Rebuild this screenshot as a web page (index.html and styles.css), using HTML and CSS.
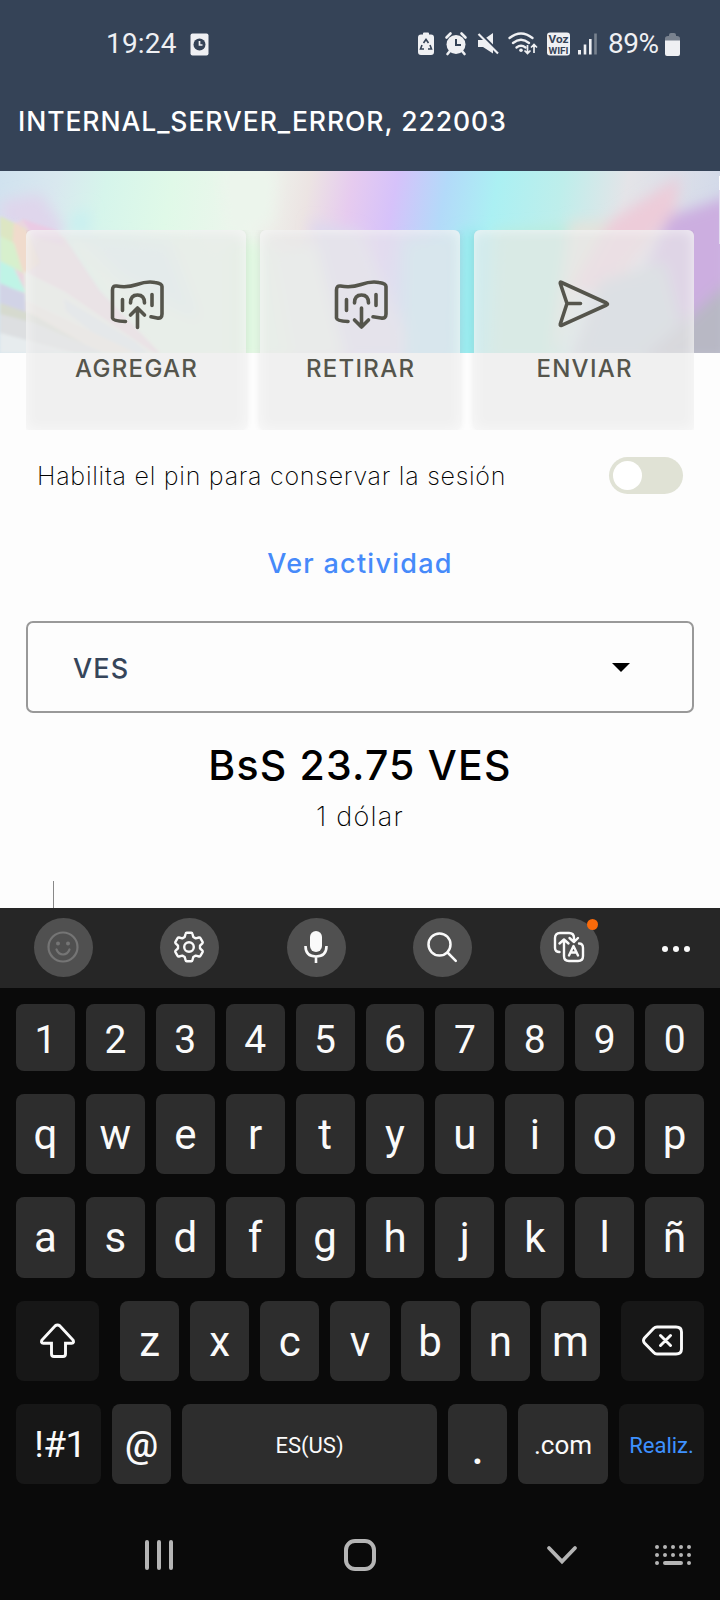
FILE: index.html
```
<!DOCTYPE html>
<html lang="es">
<head>
<meta charset="utf-8">
<title>Cartera</title>
<link rel="stylesheet" href="styles.css">
</head>
<body>
<header class="header">
  <div class="status">
    <span class="clock">19:24</span>
    <svg class="note" width="19" height="23" viewBox="0 0 19 23"><rect x=".5" y=".5" width="18" height="22" rx="2" fill="#eff0f3"/><circle cx="9.500" cy="11.500" r="6" fill="#354357"/><path d="M9.500 8v4h3" fill="none" stroke="#eff0f3" stroke-width="1.700"/></svg>
    <svg class="sysicons" width="180" height="24" viewBox="0 0 180 24" fill="#eff0f3" stroke="none">
      <path d="M5 2.500V1.500Q5 .5 6 .5h4q1 0 1 1v1h2q3 0 3 3V20q0 3-3 3H3q-3 0-3-3V5.500q0-3 3-3z"/>
      <path d="M5.500 11 8 7.500l2.500 3.500M12 13l1.500 4H10M6 17H2.500L4 13" fill="none" stroke="#354357" stroke-width="1.600"/>
      <circle cx="38" cy="12.500" r="9.500"/><path d="m28.500 5.500 4-4m11 0 4 4M32 19l-2.500 3M44 19l2.500 3" stroke="#eff0f3" stroke-width="2.600" fill="none" stroke-linecap="round"/><path d="M38 7v6h5" stroke="#354357" stroke-width="2" fill="none"/>
      <path d="M60 8h5l10-7v20.500l-10-6.500h-5z"/><path d="M60.500 0 80 19.500" stroke="#354357" stroke-width="3"/><path d="m60.500 2 19.500 19.500" stroke="#eff0f3" stroke-width="2.200"/>
      <g fill="none" stroke="#eff0f3" stroke-width="2.300" stroke-linecap="round"><path d="M91.500 6q11.500-9 23 0M95 11q8-6.500 16 0M98.500 15.500q4.500-3.500 9 0"/></g><circle cx="103" cy="18.300" r="1.800"/>
      <path d="M109.500 13v8.500m-3-3 3 3 3-3M116 21v-8.500m-3 3 3-3 3 3" fill="none" stroke="#eff0f3" stroke-width="1.700"/>
      <rect x="129" y=".5" width="23" height="23" rx="3"/><text x="140.500" y="10.800" class="voz" textLength="20" lengthAdjust="spacingAndGlyphs">Voz</text><text x="140.500" y="21.700" class="wifi" textLength="20" lengthAdjust="spacingAndGlyphs">WIFI</text>
      <path d="M160 18v4.500h3V18zM165.700 12.500v10h2.600v-10zM171 7v15.500h2.600V7z"/><path d="M176.200 1.500v21h2.600v-21z" fill="#79828f"/>
    </svg>
    <span class="pct">89%</span>
    <svg class="batt" width="15" height="23" viewBox="0 0 15 23"><path d="M0 8V5.500Q0 3 3 3h1V2q0-2 2-2h3q2 0 2 2v1h1q3 0 3 2.500V8z" fill="#79828f"/><path d="M0 7.500h15V21q0 2-2 2H2q-2 0-2-2z" fill="#eff0f3"/></svg>
  </div>
  <div class="error"><span>INTERNAL_SERVER_ERROR, 222003</span></div>
</header>
<main class="page">
  <svg class="banner" viewBox="0 0 720 182" preserveAspectRatio="none">
    <defs>
      <linearGradient id="base" gradientUnits="userSpaceOnUse" x1="0" y1="0" x2="700" y2="130"><stop offset="0" stop-color="#d0e2ef"/><stop offset=".08" stop-color="#d9e8ef"/><stop offset=".15" stop-color="#d6f5eb"/><stop offset=".24" stop-color="#e0f9e8"/><stop offset=".36" stop-color="#eef5ed"/><stop offset=".43" stop-color="#ece4e3"/><stop offset=".49" stop-color="#e6cbef"/><stop offset=".55" stop-color="#d6c2fa"/><stop offset=".62" stop-color="#b3daf9"/><stop offset=".69" stop-color="#abf0f3"/><stop offset=".78" stop-color="#beeeeb"/><stop offset=".87" stop-color="#e4e4e8"/><stop offset="1" stop-color="#d3dae9"/></linearGradient>
      <filter id="soft" x="-30%" y="-30%" width="160%" height="160%"><feGaussianBlur stdDeviation="7"/></filter>
      <filter id="fine"><feGaussianBlur stdDeviation="1.500"/></filter>
    </defs>
    <rect width="720" height="182" fill="url(#base)"/>
    <g filter="url(#soft)">
      <path d="M65 65 300 80 340 190H150z" fill="#e6f5e7"/>
      <path d="M75 65 170 70 200 150 120 110z" fill="#dbeeed"/>
      <path d="M230 70h30v120h-30z" fill="#e0f8e1"/>
      <path d="M220 0 275 0 272 50 230 60z" fill="#ecf5ec"/>
      <path d="M270 80 330 70 350 190H290z" fill="#e8eeea"/>
      <path d="M310 50 360 60 420 190H345z" fill="#dcd8ee"/>
      <path d="M405 70h50v120h-50z" fill="#b8dff3"/>
      <path d="M460 60h22v130h-24z" fill="#97eaed"/>
      <path d="M495 60 570 55 560 190H490z" fill="#b9ebdd"/>
      <path d="M570 50 610 50 590 100 550 190z" fill="#e2e3dc"/>
      <path d="M680 5 610 50 570 120h40L675 40z" fill="#edccd9"/>
      <path d="M670 45 730 25v165H600z" fill="#ccaee0"/>
      <path d="M600 110 665 90 690 190H570z" fill="#c4ced9"/>
      <path d="M730 110v80h-90z" fill="#b8b8c4"/>
      <path d="M0 30 40 22 66 60 50 72 0 50z" fill="#dfd6ec"/>
      <path d="M70 48 88 35 90 62 70 65z" fill="#c8f0f0"/>
    </g>
    <g filter="url(#fine)">
      <path d="M24 48 64 66 100 120 160 182H60L0 100V60z" fill="#ead6df"/>
      <path d="M22 48 58 60 64 74 34 66z" fill="#eacbe4"/>
      <path d="M0 45 26 58 28 90 0 82z" fill="#dde6c3"/>
      <path d="M14 51 27 60 40 92 23 104 12 80z" fill="#f0dbcc"/>
      <path d="M0 65 14 72 23 102 0 90z" fill="#d7f0cd"/>
      <path d="M0 90 14 97 26 122 0 114z" fill="#bff4e6"/>
      <path d="M0 112 25 123 28 145 0 134z" fill="#d1d3e6"/>
      <path d="m24 100 40 20 90 62H60L26 145z" fill="#e9ede6"/>
      <path d="m64 128 70 42 14 12h-30L66 140z" fill="#dce4ea"/>
      <path d="m26 130 110 52h-30l-80-37z" fill="#ece4de"/>
      <path d="M0 132 32 143 100 182H0z" fill="#d6dacf"/>
      <path d="M0 143 35 152 105 182H0z" fill="#dddfe1"/>
      <path d="M0 162 75 182H0z" fill="#e7ecee"/>
    </g>
    <rect x="719" y="5" width="1" height="14" fill="#fff"/><rect x="719" y="19" width="1" height="54" fill="#e4def0"/>
  </svg>
  <section class="actions">
    <button class="card"><svg width="54" height="52" viewBox="0 0 54 52"><path d="M15.500 42.500Q3 42 2.500 39V11q0-4.500 4-4Q17 9 27 5.500T45 3.500q7 1 7 4V35q0 5-5 4l-6-1.200M12.500 20.500v11M42 15.500v11M20.500 24q0-8 7-8t7 8M27.500 48.500V29m-7 7 7-7 7 7"/></svg><span>AGREGAR</span></button>
    <button class="card mid"><svg width="54" height="52" viewBox="0 0 54 52"><path d="M14 42.500Q3 42 2.500 39V11q0-4.500 4-4Q17 9 27 5.500T45 3.500q7 1 7 4V35q0 5-5 4l-8-1.200M12.500 20.500v11M42 15.500v11M20.500 24q0-8 7-8t7 8M27.500 29v19m-7-7 7 7 7-7"/></svg><span>RETIRAR</span></button>
    <button class="card"><svg width="54" height="52" viewBox="0 0 54 52"><path d="M3.500 3.500q-1.500-1-1.200 1L9 24.500 2.300 45q-.3 2 1.200 1.300L48.500 26q2-1 0-2zM9 24.500h13.500"/></svg><span>ENVIAR</span></button>
  </section>
  <section class="pin"><span>Habilita el pin para conservar la sesión</span><i class="toggle"></i></section>
  <a class="link"><span>Ver actividad</span></a>
  <div class="select"><span>VES</span><i class="caret"></i></div>
  <div class="amount"><span>BsS 23.75 VES</span></div>
  <div class="rate"><span>1 dólar</span></div>
  <div class="field"></div>
</main>
<section class="tools">
  <i class="tool"><svg width="59" height="59" fill="none" stroke="#757575" stroke-width="2.200" stroke-linecap="round"><circle cx="29" cy="29" r="14.500"/><path d="M22.500 31.500q2 5 6.500 5t6.500-5"/><g fill="#757575" stroke="none"><circle cx="24" cy="25.500" r="2"/><circle cx="34" cy="25.500" r="2"/></g></svg></i>
  <i class="tool"><svg width="59" height="59" fill="none" stroke="#fafafa" stroke-width="2.400" stroke-linejoin="round"><circle cx="29" cy="29" r="4.800"/><path d="M26.700 14.800h4.600q.9 0 1.100.9l.9 3.300 2.400 1.400 3.300-.9q.9-.2 1.400.6l2.200 3.800q.4.800-.2 1.400L40 27.700v2.600l2.400 2.400q.6.600.2 1.400l-2.200 3.800q-.5.800-1.400.6l-3.300-.9-2.400 1.400-.9 3.300q-.2.900-1.100.9h-4.600q-.9 0-1.100-.9l-.9-3.300-2.400-1.400-3.300.9q-.9.200-1.400-.6l-2.200-3.800q-.4-.8.200-1.400l2.400-2.400v-2.600l-2.400-2.400q-.6-.6-.2-1.400l2.200-3.800q.5-.8 1.400-.6l3.300.9 2.400-1.400.9-3.300q.2-.9 1.100-.9z"/></svg></i>
  <i class="tool"><svg width="59" height="59" fill="none" stroke="#fafafa" stroke-width="2.600"><rect x="23" y="13" width="12" height="21" rx="6" fill="#fafafa" stroke="none"/><path d="M18.500 28q0 10.500 10.500 10.500T39.500 28M29 38.500V45"/></svg></i>
  <i class="tool"><svg width="59" height="59" fill="none" stroke="#fafafa" stroke-width="2.500" stroke-linecap="round"><circle cx="26.500" cy="26.500" r="11"/><path d="m34.500 34.500 8.300 8.300"/></svg></i>
  <i class="tool"><svg width="59" height="59" fill="none" stroke="#fafafa" stroke-width="2.400" stroke-linecap="round" stroke-linejoin="round"><path d="M19.500 34q-4.500 0-4.500-4V20q0-5 5-5h9q5 0 5 5v4M29.500 20l4.500 4 4-4M24 22v16q0 5 5 5h9q5 0 5-5v-8q0-4.500-4-4.500M19.500 25.500 24 21.500l4.500 4"/><path d="m29 37.500 4.500-9.500 4.500 9.500m-7.300-3h5.600"/></svg><b class="badge"></b></i>
  <svg class="more" width="30" height="10" fill="#fafafa"><circle cx="4" cy="5" r="3"/><circle cx="15" cy="5" r="3"/><circle cx="26" cy="5" r="3"/></svg>
</section>
<section class="keyboard">
  <div class="row digits"><b>1</b><b>2</b><b>3</b><b>4</b><b>5</b><b>6</b><b>7</b><b>8</b><b>9</b><b>0</b></div>
  <div class="row"><b>q</b><b>w</b><b>e</b><b>r</b><b>t</b><b>y</b><b>u</b><b>i</b><b>o</b><b>p</b></div>
  <div class="row"><b>a</b><b>s</b><b>d</b><b>f</b><b>g</b><b>h</b><b>j</b><b>k</b><b>l</b><b>ñ</b></div>
  <div class="row third"><b class="dark side"><svg width="36" height="36" viewBox="0 0 36 36"><path d="M15 3q2.500-2 5 0L33 17q1.500 3-1.500 3.300h-6V31q0 2.500-2.500 2.500h-9Q11.500 33.500 11.500 31V20.300h-8Q.5 20 2 17z"/></svg></b><div class="letters"><b>z</b><b>x</b><b>c</b><b>v</b><b>b</b><b>n</b><b>m</b></div><b class="dark side"><svg width="42" height="32" viewBox="0 0 42 32"><path d="M15 2h19q5.500 0 5.500 5v17q0 5-5.500 5H15q-2 0-3.500-1.700L2.500 18q-2-2.500 0-5l9-9.500Q13 2 15 2zM18.500 10.500l10 10m0-10-10 10"/></svg></b></div>
  <div class="row last"><b class="dark sym">!#1</b><b class="at">@</b><b class="space">ES(US)</b><b class="dot">.</b><b class="com">.com</b><b class="dark done">Realiz.</b></div>
</section>
<nav class="nav">
  <svg class="recent" width="28" height="32"><path d="M2 3v26M14 3v26M26 3v26" stroke="#b5b5b5" stroke-width="4" stroke-linecap="round"/></svg>
  <svg class="home" width="32" height="32"><rect x="2" y="2" width="28" height="28" rx="9" fill="none" stroke="#b5b5b5" stroke-width="4"/></svg>
  <svg class="down" width="32" height="20"><path d="m3 3 13 13.500L29 3" fill="none" stroke="#b5b5b5" stroke-width="3.800" stroke-linecap="round"/></svg>
  <svg class="kb" width="36" height="20" stroke="#b5b5b5" stroke-width="4" stroke-linecap="round"><path d="M2 2h.01M10 2h.01M18 2h.01M26 2h.01M34 2h.01M2 10h.01M10 10h.01M18 10h.01M26 10h.01M34 10h.01M2 18h.01M10 18h16M34 18h.01"/></svg>
</nav>
</body>
</html>
```
FILE: styles.css
```
* { box-sizing: border-box; }
body { margin: 0; width: 720px; height: 1600px; overflow: hidden; background: #0a0a0a; font-family: Inter, "Liberation Sans", sans-serif; }
svg { display: block; flex: none; }
span { white-space: nowrap; }
.header { height: 171px; background: #354357; }
.status { height: 88px; display: flex; align-items: center; color: #eff0f3; font: 28px/40px Roboto, sans-serif; padding-left: 106px; }
.clock { width: 84px; letter-spacing: .2px; }
.sysicons { margin-left: 209px; overflow: visible; }
.voz, .wifi { font: bold 10px Roboto, sans-serif; fill: #354357; text-anchor: middle; }
.wifi { font-size: 9.500px; }
.pct { margin-left: 10px; width: 57px; letter-spacing: -.5px; }
.error { height: 65px; line-height: 66px; padding-left: 18px; color: #fff; font-size: 26.500px; font-weight: 500; letter-spacing: .950px; }
.page { height: 737px; background: #fdfdfd; }
.banner { width: 720px; height: 182px; }
.actions { display: flex; gap: 14px; height: 200px; margin: -123px 26px 0; position: relative; clip-path: inset(0); }
.card { flex: 0 0 220px; height: 200px; border: 0; border-radius: 6px; padding: 49px 0 0; display: flex; flex-direction: column; align-items: center; background: rgba(233,233,233,.65); box-shadow: inset 0 0 14px rgba(255,255,255,.6), 0 0 6px rgba(90,90,90,.12); color: #55554c; font: 500 24px/30px Inter, sans-serif; letter-spacing: 1.300px; }
.card.mid { flex: 0 0 200px; }
.card span { margin-right: -1.300px; }
.card svg { fill: none; stroke: #55554c; stroke-width: 3.600; stroke-linecap: round; stroke-linejoin: round; margin: 0 0 23px 1px; }
.pin { height: 91px; padding: 0 37px; display: flex; align-items: center; justify-content: space-between; font-size: 25px; font-weight: 200; letter-spacing: .740px; color: #000; }
.pin span { padding-top: 1px; }
.toggle { width: 74px; height: 37px; border-radius: 19px; background: #e0e2d5; padding: 4px; }
.toggle::before { content: ""; display: block; width: 29px; height: 29px; border-radius: 50%; background: #fff; }
.link { display: block; text-align: center; height: 84px; line-height: 86px; color: #468afa; font-size: 27px; font-weight: 500; letter-spacing: 1.250px; }
.select { margin: 16px 26px 0; height: 92px; border: 2px solid #999; border-radius: 7px; display: flex; align-items: center; justify-content: space-between; padding: 1px 62px 0 45px; color: #36455a; font-size: 27px; font-weight: 500; letter-spacing: 1.200px; }
.select span { padding-top: 2px; }
.caret { border: 9px solid transparent; border-top-color: #000; border-bottom: 0; }
.amount { text-align: center; height: 105px; line-height: 105px; color: #000; font-size: 41px; font-weight: 500; letter-spacing: 1.200px; }
.rate { text-align: center; height: 40px; line-height: 38px; margin-top: -20px; font-size: 27px; font-weight: 200; letter-spacing: 1.200px; color: #000; }
.field { margin: 43px 0 0 53px; width: 1px; height: 27px; background: #888; }
.tools { position: relative; height: 80px; background: #262626; display: flex; align-items: center; gap: 67.400px; padding: 0 0 2px 34px; }
.tool { position: relative; width: 59px; height: 59px; border-radius: 50%; background: #505050; flex: none; }
.badge { position: absolute; right: 1px; top: 1px; width: 11px; height: 11px; border-radius: 50%; background: #fa6a0a; }
.more { margin: 3px 0 0 -5.400px; }
.keyboard { height: 497px; padding: 16px 16px 0; display: flex; flex-direction: column; gap: 23px; font: 42px Roboto, sans-serif; }
.row { display: flex; gap: 11px; height: 80.330px; flex: none; }
.row b { flex: 1 1 0; font-weight: 400; border-radius: 8px; background: #2d2d2d; color: #fafafa; display: flex; align-items: center; justify-content: center; min-width: 0; padding-top: 1px; }
.row.digits { height: 67px; font-size: 39px; }
.row.digits b { padding-top: 4px; }
.row.third { gap: 21px; }
.letters { display: flex; flex: 1; gap: 11px; }
.row b.dark { background: #171717; }
.row b.side { flex: 0 0 83px; }
.side svg { fill: none; stroke: #fafafa; stroke-width: 2.900; stroke-linecap: round; }
.row b.sym { flex: 0 0 85px; font-size: 37px; padding: 1px 0 0 3px; letter-spacing: -.5px; }
.row b.at { flex: 0 0 59px; font-size: 37px; font-weight: 500; }
.row b.space { flex: 1; font-size: 22px; padding-top: 3px; }
.row b.dot { flex: 0 0 59px; padding-top: 10px; font-weight: 500; }
.row b.com { flex: 0 0 90px; font-size: 26px; padding-top: 2px; }
.row b.done { flex: 0 0 85px; font-size: 22px; color: #3e91ff; padding-top: 3px; }
.nav { height: 115px; display: flex; align-items: center; padding: 25px 0 0 145px; }
.home { margin-left: 171px; }
.down { margin-left: 170px; }
.kb { margin-left: 77px; overflow: visible; }
```
